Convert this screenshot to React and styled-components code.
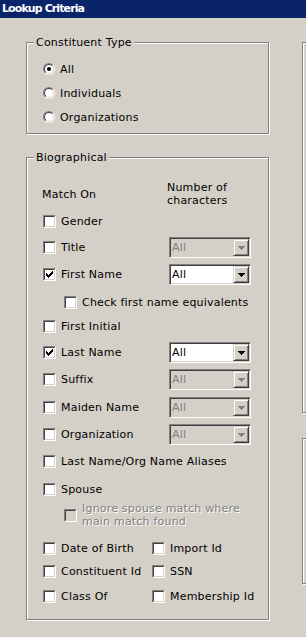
import React from 'react';
import styled, { createGlobalStyle } from 'styled-components';

const GlobalStyle = createGlobalStyle`
  html, body {
    margin: 0;
    padding: 0;
    background: #d4d0c8;
    overflow: hidden;
  }
  body {
    font-family: "DejaVu Sans", "Liberation Sans", sans-serif;
    font-size: 11px;
    letter-spacing: 0.2px;
    color: #000;
  }
  #root {
    width: 306px;
    height: 637px;
    overflow: hidden;
  }
`;

const TitleBar = styled.div`
  height: 18px;
  line-height: 18px;
  background: #0a246a;
  color: #fff;
  font-weight: bold;
  letter-spacing: -0.9px;
  padding-left: 2px;
  white-space: nowrap;
`;

const Main = styled.div`
  display: flex;
  gap: 33px;
  padding: 24px 0 0 26px;
`;

const Column = styled.div`
  display: flex;
  flex-direction: column;
  flex: none;
  width: ${p => p.$width}px;
  gap: ${p => p.$gap}px;
`;

/* etched group box, windows classic style */
const GroupBox = styled.div`
  position: relative;
  box-sizing: border-box;
  border: 1px solid #808080;
  box-shadow: inset 1px 1px 0 #fff, 1px 1px 0 #fff;
  height: ${p => (p.$height ? `${p.$height}px` : 'auto')};
  padding: ${p => p.$pad || '0'};
`;

const Legend = styled.span`
  position: absolute;
  top: -7px;
  left: 7px;
  padding: 0 2px;
  line-height: 13px;
  background: #d4d0c8;
  white-space: nowrap;
`;

const RadioRow = styled.label`
  display: flex;
  align-items: center;
  height: 24px;
  gap: 5px;
`;

const RadioOuter = styled.span`
  position: relative;
  box-sizing: border-box;
  width: 12px;
  height: 12px;
  border-radius: 50%;
  border: 1px solid;
  border-color: #808080 #fff #fff #808080;
  flex: none;
`;

const RadioInner = styled.span`
  display: block;
  box-sizing: border-box;
  width: 10px;
  height: 10px;
  border-radius: 50%;
  border: 1px solid;
  border-color: #404040 #d4d0c8 #d4d0c8 #404040;
  background: #fff;
`;

const RadioDot = styled.span`
  position: absolute;
  left: 3px;
  top: 3px;
  width: 4px;
  height: 4px;
  border-radius: 50%;
  background: #000;
`;

const Radio = ({ checked, children }) => (
  <RadioRow>
    <RadioOuter>
      <RadioInner />
      {checked && <RadioDot />}
    </RadioOuter>
    <span>{children}</span>
  </RadioRow>
);

const HeaderRow = styled.div`
  display: grid;
  grid-template-columns: 124px auto;
  align-items: center;
  height: 26px;
  line-height: 13px;
`;

const MatchOn = styled.span`
  margin-left: -1px;
`;

const Row = styled.div`
  display: flex;
  align-items: center;
  height: ${p => p.$h || 21}px;
  margin-top: ${p => p.$top || 0}px;
`;

const CheckItem = styled.label`
  display: flex;
  align-items: center;
  gap: 5px;
  flex: none;
  width: ${p => (p.$width ? `${p.$width}px` : 'auto')};
  margin-left: ${p => p.$indent || 0}px;
  white-space: nowrap;
`;

const Box = styled.span`
  box-sizing: border-box;
  flex: none;
  width: 13px;
  height: 13px;
  border: 1px solid;
  border-color: #808080 #fff #fff #808080;
  display: flex;
`;

const BoxInner = styled.span`
  flex: 1;
  border: 1px solid;
  border-color: #404040 #d4d0c8 #d4d0c8 #404040;
  background: ${p => (p.$disabled ? '#d4d0c8' : '#fff')};
  display: flex;
  align-items: center;
  justify-content: center;
`;

const Label = styled.span`
  line-height: 13px;
  color: ${p => (p.$disabled ? '#808080' : '#000')};
  text-shadow: ${p => (p.$disabled ? '1px 1px 0 #fff' : 'none')};
`;

const Check = ({ checked, disabled, children, width, indent }) => (
  <CheckItem $width={width} $indent={indent}>
    <Box>
      <BoxInner $disabled={disabled}>
        {checked && (
          <svg width="7" height="7" viewBox="0 0 7 7" shapeRendering="crispEdges">
            <path
              fill="#000"
              d="M6 0h1v1H6z M5 1h2v1H5z M0 2h1v1H0z M4 2h3v1H4z M0 3h2v1H0z M3 3h3v1H3z M0 4h5v1H0z M1 5h3v1H1z M2 6h1v1H2z"
            />
          </svg>
        )}
      </BoxInner>
    </Box>
    <Label $disabled={disabled}>{children}</Label>
  </CheckItem>
);

const Combo = styled.div`
  box-sizing: border-box;
  display: flex;
  width: 82px;
  height: 21px;
  padding: 1px;
  border: 1px solid;
  border-color: #808080 #fff #fff #808080;
  box-shadow: inset 1px 1px 0 #404040, inset -1px -1px 0 #d4d0c8;
`;

const ComboValue = styled.div`
  flex: 1;
  background: ${p => (p.$disabled ? '#d4d0c8' : '#fff')};
  color: ${p => (p.$disabled ? '#808080' : '#000')};
  padding-left: 1px;
  line-height: 17px;
`;

const ComboButton = styled.div`
  box-sizing: border-box;
  width: 16px;
  height: 17px;
  background: #d4d0c8;
  border: 1px solid;
  border-color: #d4d0c8 #404040 #404040 #d4d0c8;
  box-shadow: inset 1px 1px 0 #fff, inset -1px -1px 0 #808080;
  display: flex;
  align-items: center;
  justify-content: center;
`;

const Dropdown = ({ disabled }) => (
  <Combo>
    <ComboValue $disabled={disabled}>All</ComboValue>
    <ComboButton>
      <svg width="7" height="4" viewBox="0 0 7 4" shapeRendering="crispEdges">
        <path
          fill={disabled ? '#808080' : '#000'}
          d="M0 0h7v1H0z M1 1h5v1H1z M2 2h3v1H2z M3 3h1v1H3z"
        />
      </svg>
    </ComboButton>
  </Combo>
);

const bioRows = [
  { label: 'Gender', top: 4 },
  { label: 'Title', top: 5, combo: 'off' },
  { label: 'First Name', top: 6, checked: true, combo: 'on' },
  { label: 'Check first name equivalents', top: 7, indent: 21 },
  { label: 'First Initial', top: 3 },
  { label: 'Last Name', top: 5, checked: true, combo: 'on' },
  { label: 'Suffix', top: 6, combo: 'off' },
  { label: 'Maiden Name', top: 7, combo: 'off' },
  { label: 'Organization', top: 6, combo: 'off' },
  { label: 'Last Name/Org Name Aliases', top: 6 },
  { label: 'Spouse', top: 7 },
];

const pairRows = [
  { top: 10, a: 'Date of Birth', b: 'Import Id' },
  { top: 2, a: 'Constituent Id', b: 'SSN' },
  { top: 4, a: 'Class Of', b: 'Membership Id' },
];

const App = () => (
  <>
    <GlobalStyle />
    <TitleBar>Lookup Criteria</TitleBar>
    <Main>
      <Column $width={243} $gap={23}>
        <GroupBox $height={92} $pad="14px 0 0 16px">
          <Legend>Constituent Type</Legend>
          <Radio checked>All</Radio>
          <Radio>Individuals</Radio>
          <Radio>Organizations</Radio>
        </GroupBox>

        <GroupBox $pad="23px 0 12px 16px">
          <Legend>Biographical</Legend>
          <HeaderRow>
            <MatchOn>Match On</MatchOn>
            <span>
              Number of
              <br />
              characters
            </span>
          </HeaderRow>

          {bioRows.map(r => (
            <Row key={r.label} $top={r.top}>
              <Check checked={r.checked} indent={r.indent} width={r.combo ? 126 : undefined}>
                {r.label}
              </Check>
              {r.combo && <Dropdown disabled={r.combo === 'off'} />}
            </Row>
          ))}

          <Row $top={2} $h={26}>
            <Check disabled indent={21}>
              Ignore spouse match where
              <br />
              main match found
            </Check>
          </Row>

          {pairRows.map(r => (
            <Row key={r.a} $top={r.top}>
              <Check width={109}>{r.a}</Check>
              <Check>{r.b}</Check>
            </Row>
          ))}
        </GroupBox>
      </Column>

      <Column $width={200} $gap={25}>
        <GroupBox $height={371} />
        <GroupBox $height={146} />
      </Column>
    </Main>
  </>
);

export default App;
